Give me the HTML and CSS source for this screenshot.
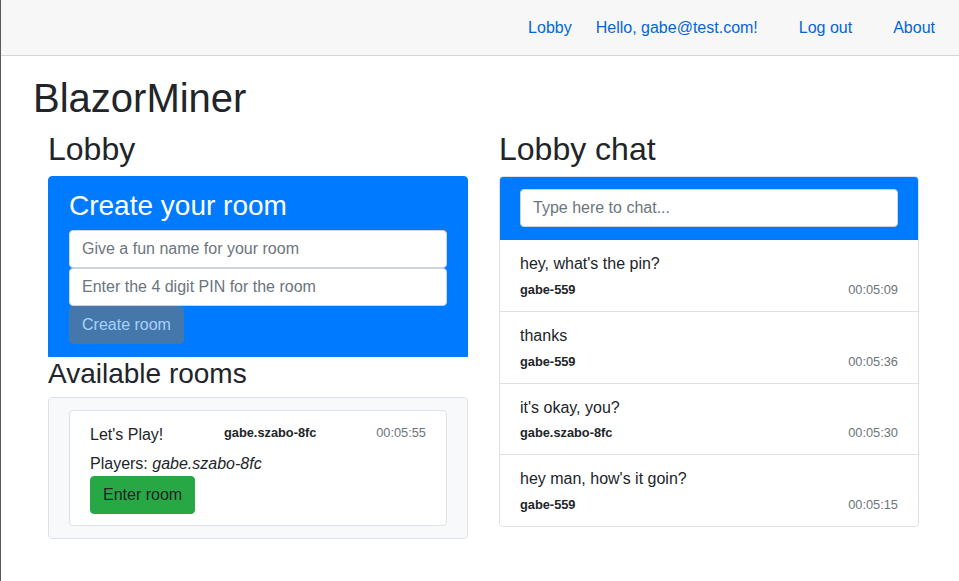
FILE: index.html
```html
<!DOCTYPE html>
<html lang="en">
<head>
<meta charset="utf-8">
<title>BlazorMiner</title>
<link rel="stylesheet" href="styles.css">
</head>
<body>
<div class="app">
  <header class="top-row">
    <a class="nav-link" href="#">Lobby</a>
    <a class="nav-link" href="#">Hello, gabe@test.com!</a>
    <a class="nav-link nav-btn" href="#">Log out</a>
    <a class="nav-link" href="#">About</a>
  </header>
  <main class="content">
    <h1 class="title">BlazorMiner</h1>
    <div class="columns">
      <section class="col">
        <h2 class="h2">Lobby</h2>
        <div class="create-card">
          <h3 class="h3 white create-title">Create your room</h3>
          <input class="form-control" type="text" placeholder="Give a fun name for your room">
          <input class="form-control" type="text" placeholder="Enter the 4 digit PIN for the room">
          <button class="btn btn-disabled" type="button">Create room</button>
        </div>
        <h3 class="h3 rooms-title">Available rooms</h3>
        <div class="rooms-card">
          <div class="room">
            <div class="room-head">
              <span class="room-name">Let's Play!</span>
              <span class="meta-user">gabe.szabo-8fc</span>
              <span class="meta-time">00:05:55</span>
            </div>
            <div class="players">Players: <em>gabe.szabo-8fc</em></div>
            <button class="btn btn-success" type="button">Enter room</button>
          </div>
        </div>
      </section>
      <section class="col">
        <h2 class="h2">Lobby chat</h2>
        <div class="chat-card">
          <div class="chat-head">
            <input class="form-control" type="text" placeholder="Type here to chat...">
          </div>
          <ul class="messages">
            <li class="msg">
              <div class="msg-text">hey, what's the pin?</div>
              <div class="msg-meta"><span class="meta-user">gabe-559</span><span class="meta-time">00:05:09</span></div>
            </li>
            <li class="msg">
              <div class="msg-text">thanks</div>
              <div class="msg-meta"><span class="meta-user">gabe-559</span><span class="meta-time">00:05:36</span></div>
            </li>
            <li class="msg">
              <div class="msg-text">it's okay, you?</div>
              <div class="msg-meta"><span class="meta-user">gabe.szabo-8fc</span><span class="meta-time">00:05:30</span></div>
            </li>
            <li class="msg">
              <div class="msg-text">hey man, how's it goin?</div>
              <div class="msg-meta"><span class="meta-user">gabe-559</span><span class="meta-time">00:05:15</span></div>
            </li>
          </ul>
        </div>
      </section>
    </div>
  </main>
</div>
</body>
</html>
```
FILE: styles.css
```css
* { box-sizing: border-box; }
html, body { margin: 0; padding: 0; }
body {
  font-family: "Liberation Sans", Arial, sans-serif;
  font-size: 16px;
  line-height: 1.5;
  color: #212529;
  background: #fff;
}
.app {
  min-height: 581px;
  border-left: 1px solid #5a5a5a;
}
.top-row {
  height: 56px;
  background: #f7f7f7;
  border-bottom: 1px solid #d6d5d5;
  display: flex;
  align-items: center;
  justify-content: flex-end;
  gap: 24px;
  padding-right: 24px;
}
.nav-link {
  color: #0366d6;
  text-decoration: none;
  white-space: nowrap;
}
.nav-btn { padding: 0 17px; }
.content {
  padding: 18px 0 0 32px;
}
.title {
  font-size: 40px;
  font-weight: 400;
  line-height: 1.2;
  margin: 0 0 8px;
}
.columns {
  display: grid;
  grid-template-columns: 420px 420px;
  column-gap: 31px;
  padding-left: 15px;
}
.h2 {
  font-size: 32px;
  font-weight: 400;
  line-height: 1.2;
  margin: 0 0 8px;
}
.h3 {
  font-size: 28px;
  font-weight: 400;
  line-height: 1.2;
  margin: 0 0 8px;
}
.create-title { margin-bottom: 7px; }
.rooms-title { margin-bottom: 6px; }
.white { color: #fff; }
.create-card {
  background: #007bff;
  border: 1px solid #007bff;
  border-radius: 4px 4px 0 0;
  padding: 12px 20px;
  display: flex;
  flex-direction: column;
  align-items: flex-start;
}
.form-control {
  display: block;
  width: 100%;
  height: 38px;
  padding: 6px 12px;
  font-family: inherit;
  font-size: 16px;
  color: #495057;
  background: #fff;
  border: 1px solid #ced4da;
  border-radius: 4px;
  margin: 0;
}
.form-control::placeholder { color: #6c757d; }
.btn {
  display: inline-block;
  height: 38px;
  padding: 6px 12px;
  font-family: inherit;
  font-size: 16px;
  line-height: 1.5;
  border: 1px solid transparent;
  border-radius: 4px;
}
.btn-disabled {
  background: #4677aa;
  border-color: #4677aa;
  color: #a6d1ff;
}
.btn-success {
  background: #28a745;
  border-color: #28a745;
  color: #212529;
}
.rooms-card {
  background: #f8f9fa;
  border: 1px solid #dee2e6;
  border-radius: 4px;
  padding: 12px 20px;
}
.room {
  background: #fff;
  border: 1px solid #dee2e6;
  border-radius: 4px;
  padding: 12px 20px 11px;
}
.room-head {
  display: grid;
  grid-template-columns: 134px 1fr auto;
  align-items: start;
  margin-bottom: 5px;
}
.meta-user {
  font-size: 12.8px;
  font-weight: 700;
  line-height: 1.5;
}
.meta-time {
  font-size: 12.8px;
  color: #6c757d;
  line-height: 1.5;
}
.players em { font-style: italic; }
.chat-card {
  border: 1px solid #dee2e6;
  border-radius: 4px;
  overflow: hidden;
}
.chat-head {
  background: #007bff;
  padding: 12px 20px;
  border-bottom: 1px solid #007bff;
}
.messages {
  list-style: none;
  margin: 0;
  padding: 0;
}
.msg {
  padding: 12px 20px;
  border-bottom: 1px solid #dee2e6;
}
.msg:last-child { border-bottom: 0; }
.msg-text { margin-bottom: 3.5px; }
.msg-meta {
  display: flex;
  justify-content: space-between;
  align-items: baseline;
}
```
